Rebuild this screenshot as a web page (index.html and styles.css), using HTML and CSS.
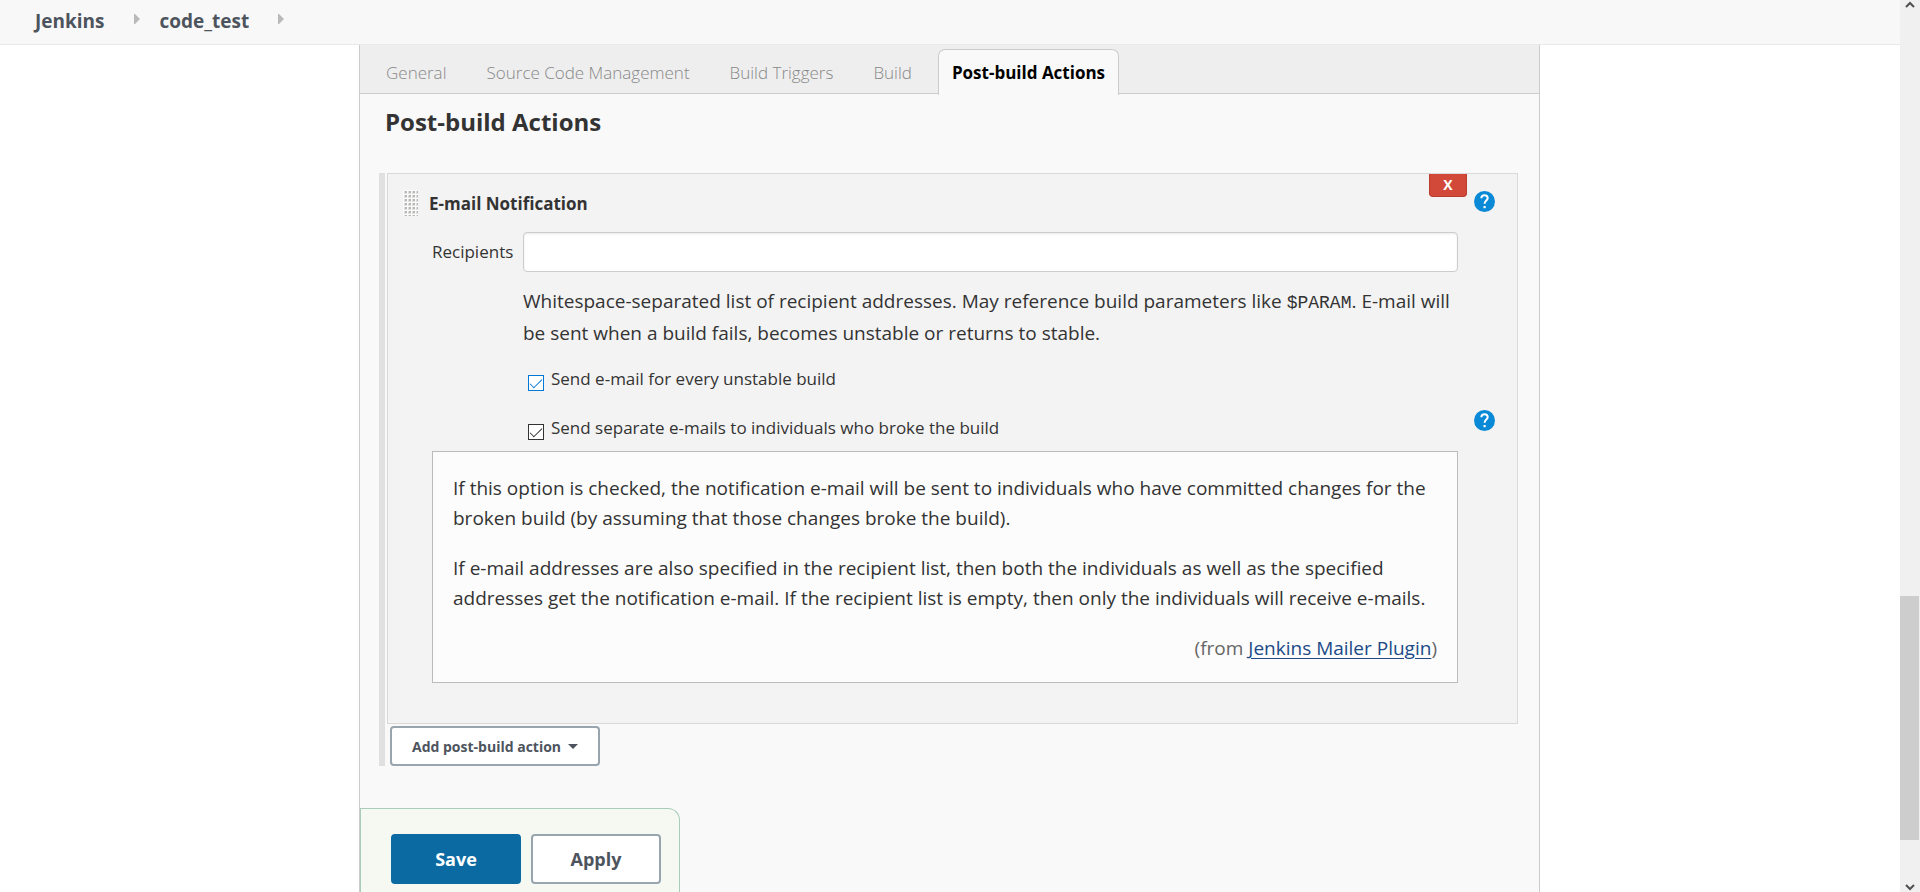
FILE: index.html
```html
<!DOCTYPE html>
<html lang="en">
<head>
<meta charset="utf-8">
<meta name="viewport" content="width=device-width, initial-scale=1">
<title>code_test Config [Jenkins]</title>
<link rel="stylesheet" href="styles.css">
</head>
<body>
<div class="page">
  <header class="breadcrumbs">
    <a class="crumb" href="#">Jenkins</a>
    <svg class="crumb-arrow" width="6" height="10" viewBox="0 0 6 10" aria-hidden="true"><path d="M0 0h1l5 5-5 5H0z" fill="#b9b9b9"/></svg>
    <a class="crumb" href="#">code_test</a>
    <svg class="crumb-arrow" width="6" height="10" viewBox="0 0 6 10" aria-hidden="true"><path d="M0 0h1l5 5-5 5H0z" fill="#b9b9b9"/></svg>
  </header>
  <main class="config">
    <nav class="tabs">
      <a class="tab" href="#">General</a>
      <a class="tab" href="#">Source Code Management</a>
      <a class="tab" href="#">Build Triggers</a>
      <a class="tab" href="#">Build</a>
      <a class="tab tab-active" href="#">Post-build Actions</a>
    </nav>
    <h1 class="section-title">Post-build Actions</h1>
    <section class="actions">
      <div class="card">
        <button class="delete" type="button">X</button>
        <div class="card-head">
          <svg class="grip" width="15" height="26" viewBox="0 0 15 26" aria-hidden="true">
            <defs><pattern id="dots" width="4" height="4" patternUnits="userSpaceOnUse"><rect width="4" height="4" fill="#fafafa"/><rect x="1" y="1" width="3" height="3" fill="#dedede"/><rect x="2" y="1" width="2" height="2" fill="#b8b8b4"/></pattern></defs>
            <rect width="15" height="26" fill="url(#dots)"/>
          </svg>
          <h2 class="card-title">E-mail Notification</h2>
          <button class="help" type="button" aria-label="Help for E-mail Notification">
            <svg width="21" height="21" viewBox="0 0 21 21" aria-hidden="true"><circle cx="10.500" cy="10.500" r="10.500" fill="#0a89d6"/><path d="M7.300 7.200C7.400 5.200 8.700 4.200 10.500 4.200s3.200 1.100 3.200 2.800c0 2.600-3.100 2.500-3.100 5.800" fill="none" stroke="#fff" stroke-width="2"/><rect x="9.500" y="15" width="2.200" height="2.200" fill="#fff"/></svg>
          </button>
        </div>
        <div class="fields">
          <label class="field-label" for="recipients">Recipients</label>
          <input class="text-input" id="recipients" type="text">
          <p class="description">Whitespace-separated list of recipient addresses. May reference build parameters like <code class="code">$PARAM</code>. E-mail will be sent when a build fails, becomes unstable or returns to stable.</p>
          <div class="option"><input class="check check-hover" id="unstable" type="checkbox" checked><label for="unstable">Send e-mail for every unstable build</label></div>
          <div class="option"><input class="check" id="individuals" type="checkbox" checked><label for="individuals">Send separate e-mails to individuals who broke the build</label></div>
          <button class="help help-option" type="button" aria-label="Help for separate e-mails">
            <svg width="21" height="21" viewBox="0 0 21 21" aria-hidden="true"><circle cx="10.500" cy="10.500" r="10.500" fill="#0a89d6"/><path d="M7.300 7.200C7.400 5.200 8.700 4.200 10.500 4.200s3.200 1.100 3.200 2.800c0 2.600-3.100 2.500-3.100 5.800" fill="none" stroke="#fff" stroke-width="2"/><rect x="9.500" y="15" width="2.200" height="2.200" fill="#fff"/></svg>
          </button>
          <div class="help-text">
            <p>If this option is checked, the notification e-mail will be sent to individuals who have committed changes for the broken build (by assuming that those changes broke the build).</p>
            <p>If e-mail addresses are also specified in the recipient list, then both the individuals as well as the specified addresses get the notification e-mail. If the recipient list is empty, then only the individuals will receive e-mails.</p>
            <p class="from">(from <a class="plugin" href="#">Jenkins Mailer Plugin</a>)</p>
          </div>
        </div>
      </div>
      <button class="btn btn-add" type="button">Add post-build action <svg width="10" height="5" viewBox="0 0 10 5" aria-hidden="true"><path d="M0 0h10L5 5z" fill="#4d545d"/></svg></button>
    </section>
    <footer class="save-bar">
      <button class="btn btn-save" type="submit">Save</button>
      <button class="btn btn-apply" type="button">Apply</button>
    </footer>
  </main>
</div>
<div class="scrollbar" aria-hidden="true">
  <svg width="10" height="7" viewBox="0 0 10 7"><path d="M1 6l4-4 4 4" fill="none" stroke="#505050" stroke-width="2"/></svg>
  <div class="track"><div class="thumb"></div></div>
  <svg width="10" height="7" viewBox="0 0 10 7"><path d="M1 1l4 4 4-4" fill="none" stroke="#505050" stroke-width="2"/></svg>
</div>
</body>
</html>
```
FILE: styles.css
```css
* { box-sizing: border-box; }
body {
  margin: 0;
  height: 100vh;
  display: flex;
  overflow: hidden;
  background: #fff;
  color: #333;
  font-family: "Open Sans", "Noto Sans", sans-serif;
  font-size: 17px;
}
h1, h2, p { margin: 0; }
button { font-family: inherit; cursor: pointer; }
.page {
  flex: 1;
  min-width: 0;
  display: flex;
  flex-direction: column;
}
.breadcrumbs {
  flex: none;
  height: 45px;
  padding: 0 35px;
  display: flex;
  align-items: center;
  background: #f8f8f8;
  border-bottom: 1px solid #e6eaea;
}
.crumb {
  color: #4d545d;
  font-size: 19px;
  font-weight: 700;
  line-height: 42px;
  padding-bottom: 2px;
  text-decoration: none;
}
.crumb-arrow { margin: 0 20px 6px 29px; }
.config {
  flex: 1;
  margin: 0 360px 0 359px;
  display: flex;
  flex-direction: column;
  background: #f9f9f9;
  border: solid #ccc;
  border-width: 0 1px;
}
.tabs {
  height: 49px;
  padding: 4px 12px 0;
  display: flex;
  gap: 12px;
  background: #eee;
  border-bottom: 1px solid #ccc;
}
.tab {
  height: 46px;
  padding: 0 13px;
  border: 1px solid transparent;
  border-bottom: 0;
  border-radius: 7px 7px 0 0;
  color: #888;
  font-weight: 300;
  line-height: 45px;
  text-decoration: none;
  white-space: nowrap;
}
.tab-active {
  background: #f9f9f9;
  border-color: #ccc;
  color: #000;
  font-weight: 700;
}
.section-title {
  padding: 10px 25px 0;
  font-size: 24px;
  font-weight: 700;
  line-height: 36px;
}
.actions {
  margin: 33px 21px 0 19px;
  padding-left: 2px;
  border-left: 6px solid #e0e0e0;
}
.card {
  position: relative;
  padding: 12px 22px 40px 15px;
  background: #f3f3f3;
  border: 1px solid #d9d9d9;
}
.delete {
  position: absolute;
  top: 0;
  right: 50px;
  width: 38px;
  height: 23px;
  padding: 0;
  background: #d24939;
  border: 1px solid #b93c2e;
  border-top: 0;
  border-radius: 0 0 4px 4px;
  color: #fff;
  font-size: 14px;
  font-weight: 700;
  line-height: 22px;
}
.card-head {
  display: flex;
  align-items: center;
  height: 34px;
}
.card-title {
  flex: 1;
  margin-left: 11px;
  font-size: 17px;
  font-weight: 700;
}
.help {
  display: flex;
  padding: 0;
  background: none;
  border: 0;
}
.card-head .help { padding-bottom: 4px; }
.fields {
  display: grid;
  grid-template-columns: 91px minmax(0, 1fr) 37px;
  margin: 12px 0 0 29px;
  align-items: center;
}
.field-label { padding-bottom: 2px; }
.text-input {
  width: 100%;
  height: 40px;
  padding: 0 10px;
  background: #fff;
  border: 1px solid #ccc;
  border-radius: 4px;
  box-shadow: inset 0 1px 2px #e9e9e9;
  font: inherit;
}
.description {
  grid-column: 2;
  padding: 13px 0 10px;
  font-size: 19px;
  line-height: 32px;
}
.code {
  font-family: "Liberation Mono", monospace;
  font-size: 18px;
  line-height: 1;
}
.option {
  grid-column: 2;
  display: flex;
  height: 49px;
  padding-left: 5px;
  line-height: 40px;
}
.check {
  appearance: none;
  width: 16px;
  height: 16px;
  margin: 16px 7px 0 0;
  border: 1px solid #333;
  background: #fff;
  display: grid;
  place-items: center;
}
.check::before {
  content: "";
  width: 11px;
  height: 5px;
  margin-top: -3px;
  border: solid #333;
  border-width: 0 0 1px 1px;
  transform: rotate(-45deg);
}
.check-hover, .check-hover::before { border-color: #0078d7; }
.help-option {
  grid-column: 3;
  justify-self: end;
  margin-bottom: 25px;
}
.help-text {
  grid-column: 1 / 3;
  margin-top: -6px;
  padding: 21px 20px 19px;
  display: grid;
  gap: 20px;
  background: #fcfcfc;
  border: 1px solid #bbb;
  font-size: 19px;
  line-height: 30px;
}
.from { color: #666; text-align: right; }
.plugin { color: #204a87; text-underline-offset: 3px; }
.btn {
  background: #fff;
  border: 2px solid #98a5af;
  border-radius: 4px;
  color: #4d545d;
  font-weight: 700;
}
.btn-add {
  display: flex;
  align-items: center;
  gap: 7px;
  height: 40px;
  margin: 2px 0 0 3px;
  padding: 0 20px;
  font-size: 14px;
}
.save-bar {
  align-self: flex-start;
  flex: none;
  display: flex;
  gap: 10px;
  height: 84px;
  margin-top: auto;
  padding: 25px 18px 0 30px;
  background: #f5f9f2;
  border: 1px solid #a9cdbb;
  border-bottom: 0;
  border-radius: 0 12px 0 0;
}
.btn-save, .btn-apply {
  width: 130px;
  height: 50px;
  font-size: 18px;
}
.btn-save {
  background: #0b6aa2;
  border-color: #0b6aa2;
  color: #fff;
}
.scrollbar {
  flex: none;
  width: 20px;
  padding: 1px 0;
  display: flex;
  flex-direction: column;
  align-items: center;
  background: #f0f0f0;
}
.track {
  flex: 1;
  align-self: stretch;
  display: flex;
  flex-direction: column;
  justify-content: flex-end;
  padding: 0 1px 44px 0;
}
.thumb { height: 244px; background: #cdcdcd; }
```
